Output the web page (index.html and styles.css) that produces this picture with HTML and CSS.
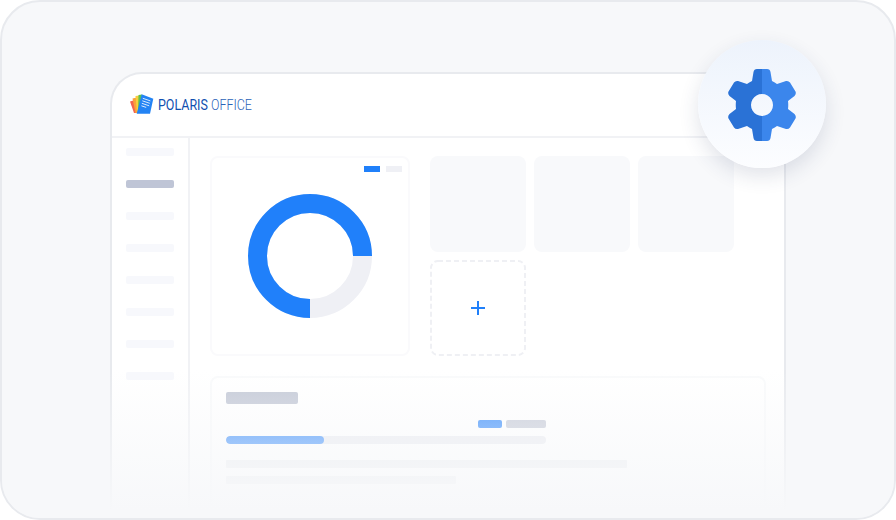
FILE: index.html
```html
<!DOCTYPE html>
<html lang="en">
<head>
<meta charset="utf-8">
<title>Polaris Office</title>
<link rel="stylesheet" href="styles.css">
</head>
<body>
<div class="frame">
  <div class="window">
    <header class="head">
      <svg class="logo-icon" width="24" height="22" viewBox="0 0 24 22">
        <polygon points="0,7.5 5,6 8,19 4,19" fill="#f2644f"/>
        <polygon points="2.5,4.5 7,3.5 9,19 5.5,19" fill="#f9a13a"/>
        <polygon points="5.5,2 9.5,1.5 10,19 7,19" fill="#f6cf3c"/>
        <polygon points="8.5,1 12,0.5 11,19 8,19" fill="#5fc04f"/>
        <polygon points="11.7,0.3 23.3,4.7 20,19.7 6.7,19.7" fill="#2383f4"/>
        <path d="M12.8 4.3l7.6 2.600M12.3 6.800l7.500 2.500M11.800 9.300l7.400 2.500M11.400 11.800l4.800 1.600" stroke="#d9e9fd" stroke-width="1" fill="none"/>
      </svg>
      <span class="logo-text"><span class="logo-strong">POLARIS</span> <span class="logo-light">OFFICE</span></span>
    </header>
    <div class="body">
      <aside class="side">
        <div class="side-item"></div>
        <div class="side-item side-item-on"></div>
        <div class="side-item"></div>
        <div class="side-item"></div>
        <div class="side-item"></div>
        <div class="side-item"></div>
        <div class="side-item"></div>
        <div class="side-item"></div>
      </aside>
      <main class="main">
        <div class="top">
          <section class="donut-card">
            <div class="legend">
              <span class="key key-blue"></span>
              <span class="key key-grey"></span>
            </div>
            <svg class="donut" width="124" height="124" viewBox="0 0 124 124">
              <circle cx="62" cy="62" r="52.5" fill="none" stroke="#eff0f5" stroke-width="19"/>
              <path d="M62 114.5A52.5 52.5 0 1 1 114.5 62" fill="none" stroke="#2080fa" stroke-width="19"/>
            </svg>
          </section>
          <div class="tiles">
            <div class="tile"></div>
            <div class="tile"></div>
            <div class="tile"></div>
            <div class="tile-add">
              <svg class="tile-dash" width="96" height="96" viewBox="0 0 96 96">
                <rect x="1" y="1" width="94" height="94" rx="7" fill="none" stroke="#eff0f4" stroke-width="2" stroke-dasharray="5 3"/>
              </svg>
              <svg width="14" height="14" viewBox="0 0 14 14">
                <path d="M7 0v14M0 7h14" stroke="#2080fa" stroke-width="2" fill="none"/>
              </svg>
            </div>
          </div>
        </div>
        <section class="panel">
          <div class="panel-title"></div>
          <div class="progress-box">
            <div class="progress-keys">
              <span class="pk pk-blue"></span>
              <span class="pk pk-grey"></span>
            </div>
            <div class="track"><div class="fill"></div></div>
          </div>
          <div class="line line-long"></div>
          <div class="line line-short"></div>
        </section>
      </main>
    </div>
  </div>
  <div class="fade"></div>
  <div class="badge">
    <svg width="72" height="72" viewBox="0 0 72 72">
      <defs>
        <clipPath id="gear-left"><rect x="0" y="0" width="36" height="72"/></clipPath>
        <clipPath id="gear-right"><rect x="36" y="0" width="36" height="72"/></clipPath>
        <path id="gear" fill-rule="evenodd" d="M31 0H41Q44 0 44.500 3L46 12Q49 13.500 51 15L60 12Q62.500 11.500 64 13.500L69.500 22.500Q70.500 25 68.500 27L62 32Q62.500 36 62 40L68.500 45Q70.500 47 69.500 49.500L64 58.500Q62.500 60.500 60 60L51 57Q49 58.500 46 60L44.500 69Q44 72 41 72H31Q28 72 27.500 69L26 60Q23 58.500 21 57L12 60Q9.500 60.500 8 58.500L2.500 49.500Q1.500 47 3.500 45L10 40Q9.500 36 10 32L3.500 27Q1.500 25 2.500 22.500L8 13.500Q9.500 11.500 12 12L21 15Q23 13.500 26 12L27.500 3Q28 0 31 0ZM36 25a11 11 0 1 0 .01 0z"/>
      </defs>
      <use href="#gear" fill="#2a72d6" clip-path="url(#gear-left)"/>
      <use href="#gear" fill="#3b86ec" clip-path="url(#gear-right)"/>
    </svg>
  </div>
</div>
</body>
</html>
```
FILE: styles.css
```css
* { box-sizing: border-box; }
html, body { margin: 0; padding: 0; }
body { width: 896px; height: 520px; overflow: hidden; background: #fff; font-family: "Roboto", "Liberation Sans", sans-serif; }
.frame {
  position: relative;
  width: 896px;
  height: 520px;
  padding: 70px 108px 0 108px;
  background: #f7f8fa;
  border: 2px solid #e8eaee;
  border-radius: 40px;
  overflow: hidden;
  display: flex;
}
.window {
  flex: 1;
  display: flex;
  flex-direction: column;
  background: #fff;
  border: 2px solid #e8eaee;
  border-bottom: 0;
  border-radius: 32px 32px 0 0;
}
.head {
  height: 64px;
  flex: none;
  display: flex;
  align-items: center;
  gap: 4px;
  padding: 0 0 0 18px;
  border-bottom: 2px solid #f1f2f5;
}
.logo-icon { display: block; }
.logo-text {
  font-size: 14px;
  line-height: 16px;
  color: #1150b0;
  white-space: nowrap;
  transform: scaleX(0.89);
  transform-origin: left center;
}
.logo-strong { font-weight: 400; }
.logo-light { font-weight: 300; color: #2a62b8; }
.body { flex: 1; display: flex; min-height: 0; }
.side {
  flex: none;
  width: 78px;
  padding: 10px 0 0 14px;
  border-right: 2px solid #f1f2f5;
  display: flex;
  flex-direction: column;
  gap: 24px;
}
.side-item { width: 48px; height: 8px; border-radius: 2px; background: #f7f8fc; }
.side-item-on { background: #bfc5d6; }
.main { flex: 1; padding: 18px 0 0 20px; display: flex; flex-direction: column; gap: 20px; }
.top { display: flex; gap: 20px; }
.donut-card {
  width: 200px;
  height: 200px;
  padding: 8px 6px 0 0;
  border: 2px solid #fafafc;
  border-radius: 8px;
  display: flex;
  flex-direction: column;
  align-items: flex-end;
}
.legend { display: flex; gap: 6px; margin-bottom: 22px; }
.key { width: 16px; height: 6px; display: block; }
.key-blue { background: #2080fa; }
.key-grey { background: #eff0f5; }
.donut { display: block; align-self: center; margin-left: 6px; }
.tiles { display: grid; grid-template-columns: repeat(3, 96px); grid-auto-rows: 96px; gap: 8px; }
.tile { background: #f8f9fb; border-radius: 8px; }
.tile-add {
  position: relative;
  display: flex;
  align-items: center;
  justify-content: center;
}
.tile-dash { position: absolute; left: 0; top: 0; }
.panel {
  width: 556px;
  height: 180px;
  padding: 14px;
  border: 2px solid #f9fafb;
  border-radius: 8px;
}
.panel-title { width: 72px; height: 12px; border-radius: 2px; background: #c5cad7; }
.progress-box { width: 320px; margin-top: 16px; }
.progress-keys { display: flex; justify-content: flex-end; gap: 4px; }
.pk { display: block; height: 8px; border-radius: 2px; }
.pk-blue { width: 24px; background: #3f90fb; }
.pk-grey { width: 40px; background: #c8ccd8; }
.track { height: 8px; margin-top: 8px; border-radius: 4px; background: #ebecf1; overflow: hidden; }
.fill { width: 98px; height: 8px; border-radius: 4px; background: #3f90fb; }
.line { height: 8px; background: #eceef1; border-radius: 1px; }
.line-long { width: 401px; margin-top: 16px; }
.line-short { width: 230px; margin-top: 8px; }
.fade {
  position: absolute;
  left: 0;
  right: 0;
  top: 368px;
  bottom: 0;
  background: linear-gradient(to bottom, rgba(247, 248, 250, 0), #f7f8fa 95%);
}
.badge {
  position: absolute;
  left: 696px;
  top: 38px;
  width: 128px;
  height: 128px;
  padding-top: 2px;
  border-radius: 50%;
  background: linear-gradient(to bottom, #edf3fc, #fcfdff);
  box-shadow: 0 8px 20px rgba(40, 60, 100, 0.14);
  display: flex;
  align-items: center;
  justify-content: center;
}
```
